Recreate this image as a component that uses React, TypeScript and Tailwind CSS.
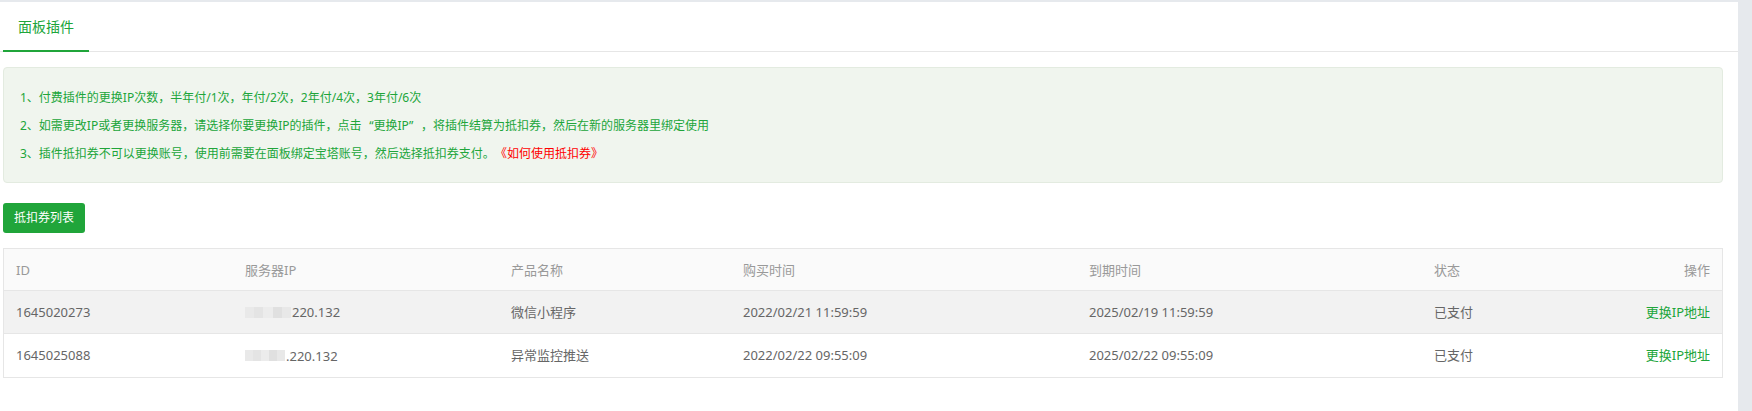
import React from "react";

const rows = [
  {
    id: "1645020273",
    ipTail: "220.132",
    blurW: "w-[46px]",
    name: "微信小程序",
    buy: "2022/02/21 11:59:59",
    exp: "2025/02/19 11:59:59",
    status: "已支付",
    bg: "bg-[#f2f2f2]",
  },
  {
    id: "1645025088",
    ipTail: ".220.132",
    blurW: "w-[40px]",
    name: "异常监控推送",
    buy: "2022/02/22 09:55:09",
    exp: "2025/02/22 09:55:09",
    status: "已支付",
    bg: "bg-white",
  },
];

const cols = "grid grid-cols-[229px_266px_232px_346px_345px_300px]";

function BlurIp({ w }: { w: string }) {
  return (
    <span className={`inline-flex ${w} h-[11px] mr-[1px] align-middle overflow-hidden blur-[0.6px]`}>
      <span className="flex-1 bg-[#e9e9e9]" />
      <span className="flex-1 bg-[#e4e4e4]" />
      <span className="flex-1 bg-[#ececec]" />
      <span className="flex-1 bg-[#e0e0e0]" />
      <span className="flex-1 bg-[#e8e8e8]" />
    </span>
  );
}

export default function App() {
  return (
    <div className="w-[1752px] h-[411px] bg-[#e6e9ed] pt-[2px] pr-[14px] font-['Noto_Sans','Noto_Sans_CJK_SC',sans-serif]">
      <div className="bg-white h-[409px]">
        <div className="h-[50px] border-b border-[#e6e6e6] pl-[3px] flex">
          <div className="relative h-[49px] w-[86px] flex items-center justify-center text-[14px] text-[#20a53a] leading-[20px]">
            面板插件
            <span className="absolute left-0 right-0 bottom-[-1px] h-[2px] bg-[#20a53a]" />
          </div>
        </div>
        <div className="pl-[3px] pr-[15px]">
          <div className="mt-[15px] h-[116px] rounded-[4px] border border-[#e3ebe0] bg-[#f0f5ee] pl-[16px] pt-[16px] text-[12px] leading-[28px] text-[#20a53a]">
            <p>1、付费插件的更换IP次数，半年付/1次，年付/2次，2年付/4次，3年付/6次</p>
            <p>
              2、如需更改IP或者更换服务器，请选择你要更换IP的插件，点击
              <span className="inline-block w-[12px] text-right">“</span>
              更换IP
              <span className="inline-block w-[12px] text-left">”</span>
              ，将插件结算为抵扣券，然后在新的服务器里绑定使用
            </p>
            <p>
              3、插件抵扣券不可以更换账号，使用前需要在面板绑定宝塔账号，然后选择抵扣券支付。
              <span className="text-[#ff0000] ml-[6px]">《如何使用抵扣券》</span>
            </p>
          </div>
          <button className="mt-[20px] h-[30px] w-[82px] rounded-[3px] bg-[#20a53a] text-white text-[12px] leading-[30px] flex items-center justify-center">
            抵扣券列表
          </button>
          <div className="mt-[15px] border border-[#e6e6e6] text-[13px]">
            <div className={`${cols} bg-[#fafafa] h-[42px] leading-[42px] text-[#999999] border-b border-[#e6e6e6]`}>
              <div className="px-[12px]">ID</div>
              <div className="px-[12px]">服务器IP</div>
              <div className="px-[12px]">产品名称</div>
              <div className="px-[12px]">购买时间</div>
              <div className="px-[12px]">到期时间</div>
              <div className="px-[12px] flex justify-between">
                <span>状态</span>
                <span>操作</span>
              </div>
            </div>
            {rows.map((r, i) => (
              <div
                key={r.id}
                className={`${cols} ${r.bg} h-[43px] leading-[42px] text-[#666666] ${i === 0 ? "border-b border-[#e6e6e6]" : ""}`}
              >
                <div className="px-[12px]">{r.id}</div>
                <div className="px-[12px] flex items-center">
                  <BlurIp w={r.blurW} />
                  <span>{r.ipTail}</span>
                </div>
                <div className="px-[12px]">{r.name}</div>
                <div className="px-[12px]">{r.buy}</div>
                <div className="px-[12px]">{r.exp}</div>
                <div className="px-[12px] flex justify-between">
                  <span>{r.status}</span>
                  <a className="text-[#20a53a] cursor-pointer">更换IP地址</a>
                </div>
              </div>
            ))}
          </div>
        </div>
      </div>
    </div>
  );
}
